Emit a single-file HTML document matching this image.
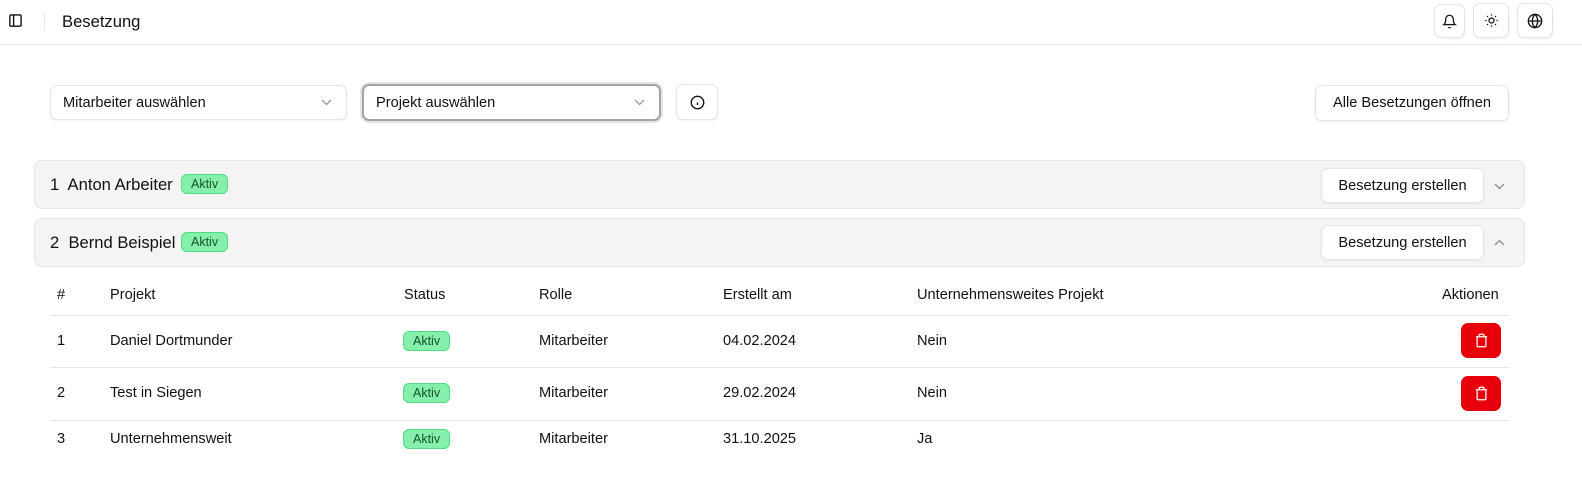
<!DOCTYPE html>
<html><head><meta charset="utf-8"><style>
*{box-sizing:border-box;margin:0;padding:0}
body{width:1582px;height:483px;background:#fff;font-family:"Liberation Sans",sans-serif;color:#111;font-size:14.6px;position:relative;overflow:hidden}
.abs{position:absolute}
.btn{position:absolute;background:#fff;border:1px solid #e4e4e7;border-radius:7px;box-shadow:0 1px 2px rgba(0,0,0,.06);display:flex;align-items:center;justify-content:center}
.sel{position:absolute;background:#fff;border:1px solid #e4e4e7;border-radius:7px;box-shadow:0 1px 2px rgba(0,0,0,.06);display:flex;align-items:center;padding-left:12px;font-size:14.6px}
.chev{position:absolute;right:14px;top:50%;margin-top:-4px}
.group{position:absolute;left:34px;width:1491px;height:49px;background:#f4f4f4;border:1px solid #e5e5e5;border-radius:8px}
.badge{position:absolute;background:#86efac;border:1px solid #4ade80;border-radius:6px;font-size:12.5px;color:#14532d;height:20px;line-height:18px;padding:0 9px}
.t{position:absolute;font-size:14.6px}
.line{position:absolute;left:50px;width:1459px;height:1px;background:#e5e5e5}
.del{position:absolute;left:1461px;width:40px;height:35px;background:#e7000b;border-radius:7px;display:flex;align-items:center;justify-content:center}
</style></head><body>
<svg class="abs" style="left:8px;top:13px" width="15" height="15" viewBox="0 0 24 24" fill="none" stroke="#111" stroke-width="2.2"><rect x="3" y="3" width="18" height="18" rx="2"/><path d="M9 3v18"/></svg>
<div class="abs" style="left:44px;top:12px;width:1px;height:18px;background:#e5e5e5"></div>
<div class="abs" style="left:62px;top:12px;font-size:16.6px">Besetzung</div>
<div class="abs" style="left:0;top:44px;width:1582px;height:1px;background:#e5e5e5"></div>
<div class="btn" style="left:1434px;top:4px;width:31px;height:34px"><svg width="15" height="15" viewBox="0 0 24 24" fill="none" stroke="#111" stroke-width="2"><path d="M6 8a6 6 0 0 1 12 0c0 7 3 9 3 9H3s3-2 3-9"/><path d="M10.3 21a1.94 1.94 0 0 0 3.4 0"/></svg></div>
<div class="btn" style="left:1473px;top:3px;width:36px;height:35px"><svg width="15" height="15" viewBox="0 0 24 24" fill="none" stroke="#111" stroke-width="2"><circle cx="12" cy="12" r="4"/><path d="M12 2v2M12 20v2M4.9 4.9l1.4 1.4M17.7 17.7l1.4 1.4M2 12h2M20 12h2M6.3 17.7l-1.4 1.4M19.1 4.9l-1.4 1.4"/></svg></div>
<div class="btn" style="left:1517px;top:3px;width:36px;height:35px"><svg width="16" height="16" viewBox="0 0 24 24" fill="none" stroke="#111" stroke-width="2"><circle cx="12" cy="12" r="10"/><path d="M12 2a14.5 14.5 0 0 0 0 20 14.5 14.5 0 0 0 0-20M2 12h20"/></svg></div>

<div class="sel" style="left:50px;top:85px;width:297px;height:35px">Mitarbeiter auswählen<svg class="chev" width="11" height="7" viewBox="0 0 11 7" fill="none" stroke="#999" stroke-width="1.3"><path d="M1 1l4.5 4.5L10 1"/></svg></div>
<div class="sel" style="left:362px;top:84px;width:299px;height:37px;border:2px solid #a3a3a3;box-shadow:0 0 0 2px #e5e5e5">Projekt auswählen<svg class="chev" width="11" height="7" viewBox="0 0 11 7" fill="none" stroke="#999" stroke-width="1.3"><path d="M1 1l4.5 4.5L10 1"/></svg></div>
<div class="btn" style="left:676px;top:84px;width:42px;height:36px"><svg width="15" height="15" viewBox="0 0 24 24" fill="none" stroke="#111" stroke-width="2.2"><circle cx="12" cy="12" r="10"/><path d="M12 16v-4M12 8h.01"/></svg></div>
<div class="btn" style="left:1315px;top:85px;width:194px;height:36px">Alle Besetzungen öffnen</div>

<div class="group" style="top:160px"></div>
<div class="abs" style="left:50px;top:175px;font-size:16.6px">1&nbsp; Anton Arbeiter</div>
<div class="badge" style="left:181px;top:174px">Aktiv</div>
<div class="btn" style="left:1321px;top:168px;width:163px;height:35px">Besetzung erstellen</div>
<svg class="abs" style="left:1494px;top:183px" width="11" height="7" viewBox="0 0 11 7" fill="none" stroke="#888" stroke-width="1.3"><path d="M1 1l4.5 4.5L10 1"/></svg>

<div class="group" style="top:218px"></div>
<div class="abs" style="left:50px;top:233px;font-size:16.6px">2&nbsp; Bernd Beispiel</div>
<div class="badge" style="left:181px;top:232px">Aktiv</div>
<div class="btn" style="left:1321px;top:225px;width:163px;height:35px">Besetzung erstellen</div>
<svg class="abs" style="left:1494px;top:239px" width="11" height="7" viewBox="0 0 11 7" fill="none" stroke="#888" stroke-width="1.3"><path d="M1 6l4.5-4.5L10 6"/></svg>

<div class="t" style="left:57px;top:287px">#</div>
<div class="t" style="left:110px;top:287px">Projekt</div>
<div class="t" style="left:404px;top:287px">Status</div>
<div class="t" style="left:539px;top:287px">Rolle</div>
<div class="t" style="left:723px;top:287px">Erstellt am</div>
<div class="t" style="left:917px;top:287px">Unternehmensweites Projekt</div>
<div class="t" style="left:1442px;top:287px">Aktionen</div>
<div class="line" style="top:315px"></div>

<div class="t" style="left:57px;top:333px">1</div>
<div class="t" style="left:110px;top:333px">Daniel Dortmunder</div>
<div class="badge" style="left:403px;top:331px">Aktiv</div>
<div class="t" style="left:539px;top:333px">Mitarbeiter</div>
<div class="t" style="left:723px;top:333px">04.02.2024</div>
<div class="t" style="left:917px;top:333px">Nein</div>
<div class="del" style="top:323px"><svg width="15" height="15" viewBox="0 0 24 24" fill="none" stroke="#fff" stroke-width="2"><path d="M3 6h18M19 6v14a2 2 0 0 1-2 2H7a2 2 0 0 1-2-2V6M8 6V4a2 2 0 0 1 2-2h4a2 2 0 0 1 2 2v2"/></svg></div>
<div class="line" style="top:367px"></div>

<div class="t" style="left:57px;top:385px">2</div>
<div class="t" style="left:110px;top:385px">Test in Siegen</div>
<div class="badge" style="left:403px;top:383px">Aktiv</div>
<div class="t" style="left:539px;top:385px">Mitarbeiter</div>
<div class="t" style="left:723px;top:385px">29.02.2024</div>
<div class="t" style="left:917px;top:385px">Nein</div>
<div class="del" style="top:376px"><svg width="15" height="15" viewBox="0 0 24 24" fill="none" stroke="#fff" stroke-width="2"><path d="M3 6h18M19 6v14a2 2 0 0 1-2 2H7a2 2 0 0 1-2-2V6M8 6V4a2 2 0 0 1 2-2h4a2 2 0 0 1 2 2v2"/></svg></div>
<div class="line" style="top:420px"></div>

<div class="t" style="left:57px;top:431px">3</div>
<div class="t" style="left:110px;top:431px">Unternehmensweit</div>
<div class="badge" style="left:403px;top:429px">Aktiv</div>
<div class="t" style="left:539px;top:431px">Mitarbeiter</div>
<div class="t" style="left:723px;top:431px">31.10.2025</div>
<div class="t" style="left:917px;top:431px">Ja</div>
</body></html>
